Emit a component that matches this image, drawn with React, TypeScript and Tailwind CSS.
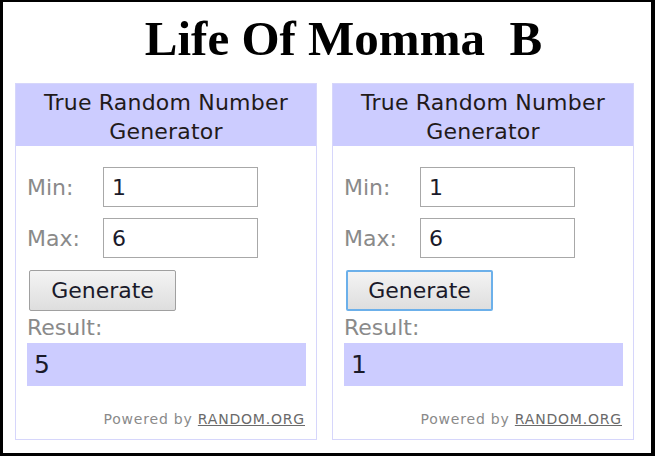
import React from "react";

const sans = { fontFamily: '"DejaVu Sans", Verdana, sans-serif' };

function Panel({ result, focused }: { result: string; focused?: boolean }) {
  return (
    <div className="w-[302px] h-[357px] border border-[#d6d6fb] bg-white flex flex-col" style={sans}>
      <div className="h-[62px] bg-[#ccccff] flex flex-col items-center justify-center pt-[3px] text-[22px] leading-[29px] text-[#221a1a] tracking-[0.2px]">
        <div>True Random Number</div>
        <div>Generator</div>
      </div>
      <div className="flex flex-col pl-[11px] pr-[10px]">
        <div className="flex items-center mt-[21px] h-[40px]">
          <span className="w-[76px] text-[22px] text-[#8a8a8a]">Min:</span>
          <div className="w-[155px] h-[40px] border border-[#a8a8a8] flex items-center pl-[8px] text-[22px] text-[#1a1a2a]">1</div>
        </div>
        <div className="flex items-center mt-[11px] h-[40px]">
          <span className="w-[76px] text-[22px] text-[#8a8a8a]">Max:</span>
          <div className="w-[155px] h-[40px] border border-[#a8a8a8] flex items-center pl-[8px] text-[22px] text-[#1a1a2a]">6</div>
        </div>
        <div
          className={
            "ml-[2px] mt-[12px] w-[147px] h-[41px] rounded-[2px] flex items-center justify-center text-[22px] text-[#1a1a2a] bg-gradient-to-b from-[#f4f4f4] to-[#dedede] " +
            (focused ? "border-2 border-[#6cb0ea]" : "border border-[#a0a0a0]")
          }
        >
          Generate
        </div>
        <div className="mt-[4px] text-[22px] leading-[26px] text-[#8a8a8a]">Result:</div>
        <div className="mt-[2px] w-[279px] h-[43px] bg-[#ccccff] flex items-center pl-[7px] text-[25px] text-[#1a1a2a]">{result}</div>
        <div className="mt-[23px] text-right text-[14px] tracking-[0.8px] text-[#8a8a8a] pr-[1px]">
          Powered by <span className="underline text-[#6a6a6a]">RANDOM.ORG</span>
        </div>
      </div>
    </div>
  );
}

export default function App() {
  return (
    <div className="w-[655px] h-[456px] bg-white border-l-[3px] border-t-[2px] border-r-[4px] border-b-[3px] border-black flex flex-col">
      <div
        className="h-[81px] flex items-center justify-center text-[49px] font-bold text-black pb-[8px] pl-[33px]"
        style={{ fontFamily: '"Liberation Serif", "Times New Roman", serif', whiteSpace: "pre" }}
      >
        {"Life Of Momma  B"}
      </div>
      <div className="flex gap-[15px] pl-[12px]">
        <Panel result="5" />
        <Panel result="1" focused />
      </div>
    </div>
  );
}
